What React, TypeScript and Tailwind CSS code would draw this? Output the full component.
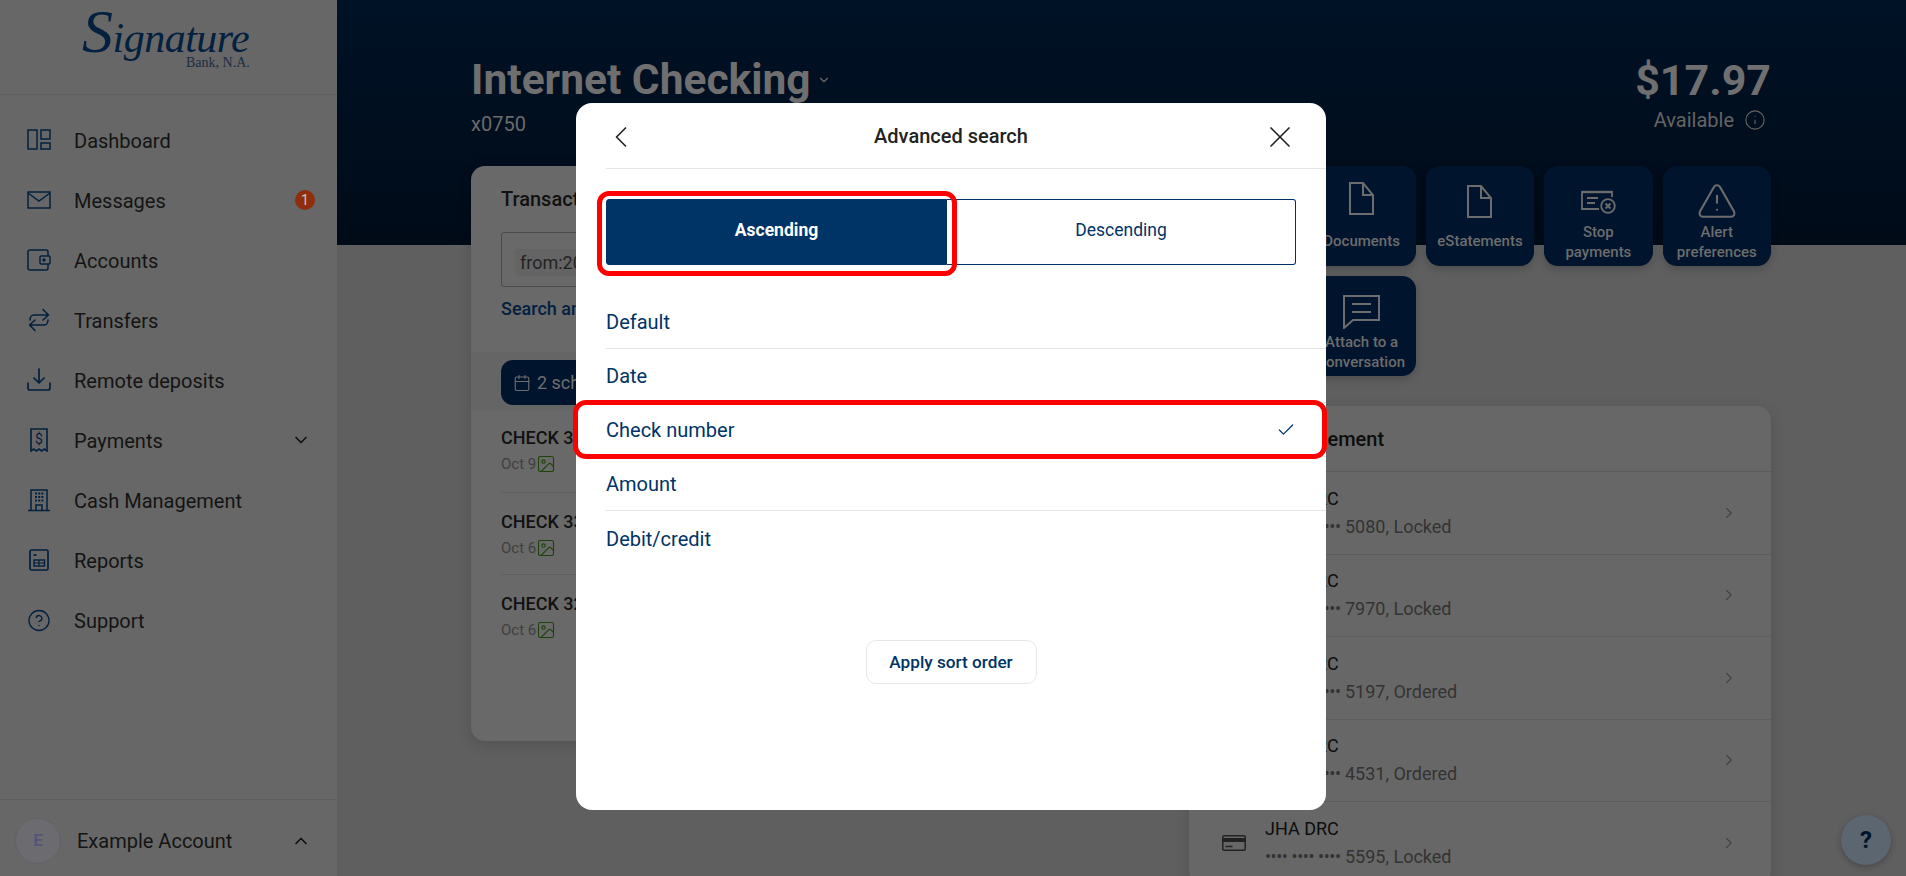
import React from 'react';
import { ChevronDown, ChevronUp, ChevronLeft, ChevronRight, X, Check, Info, CircleHelp, TriangleAlert, Calendar, Image as ImageIcon } from 'lucide-react';

const font = { fontFamily: 'Roboto, "Noto Sans", sans-serif' };
const serif = { fontFamily: '"Liberation Serif", serif' };

const DashboardIcon = () => (
  <svg width="24" height="24" viewBox="0 0 24 24" fill="none" stroke="currentColor" strokeWidth="1.5">
    <rect x="1" y="2" width="9" height="19" />
    <rect x="14" y="2" width="9" height="9" />
    <rect x="14" y="15" width="9" height="6" />
  </svg>
);

const MailIcon = () => (
  <svg width="24" height="24" viewBox="0 0 24 24" fill="none" stroke="currentColor" strokeWidth="1.5">
    <rect x="1" y="4" width="22" height="16" />
    <path d="M1 5l11 8 11-8" />
  </svg>
);

const WalletIcon = () => (
  <svg width="24" height="24" viewBox="0 0 24 24" fill="none" stroke="currentColor" strokeWidth="1.5">
    <path d="M21 8V4a2 2 0 0 0-2-2H3a2 2 0 0 0-2 2v16a2 2 0 0 0 2 2h16a2 2 0 0 0 2-2v-4" />
    <rect x="13" y="8" width="10" height="8" rx="1" />
    <circle cx="17" cy="12" r="1" fill="currentColor" />
  </svg>
);

const TransferIcon = () => (
  <svg width="24" height="24" viewBox="0 0 24 24" fill="none" stroke="currentColor" strokeWidth="1.6" strokeLinecap="round" strokeLinejoin="round">
    <path d="M3 12c0-3 2-5 4-5h14M16 1.5L21.5 7 16 12" />
    <path d="M21 12c0 3-2 5-4 5H3M8 12l-5.5 5L8 22.5" />
  </svg>
);

const DepositIcon = () => (
  <svg width="24" height="24" viewBox="0 0 24 24" fill="none" stroke="currentColor" strokeWidth="1.7" strokeLinecap="round" strokeLinejoin="round">
    <path d="M12 1v13M7 10l5 5 5-5" />
    <path d="M1 15v5a2 2 0 0 0 2 2h18a2 2 0 0 0 2-2v-5" />
  </svg>
);

const ReceiptIcon = () => (
  <svg width="24" height="24" viewBox="0 0 24 24" fill="none" stroke="currentColor" strokeWidth="1.6">
    <path d="M4 1h16v22l-2.7-2-2.6 2-2.7-2-2.6 2-2.7-2L4 23z" />
    <text x="12" y="16" textAnchor="middle" fontSize="14" fontFamily="Roboto, sans-serif" fill="currentColor" stroke="none">$</text>
  </svg>
);

const BuildingIcon = () => (
  <svg width="24" height="24" viewBox="0 0 24 24" fill="none" stroke="currentColor" strokeWidth="1.5">
    <path d="M4 22V2h16v20M1 22.5h22M9 22v-5h6v5" />
    <g fill="currentColor" stroke="none">
      {[8, 11.2, 14.4].map(x => [4.5, 8, 11.5].map(y => <rect key={`${x}-${y}`} x={x} y={y} width="2" height="2" />))}
    </g>
  </svg>
);

const ReportIcon = () => (
  <svg width="24" height="24" viewBox="0 0 24 24" fill="none" stroke="currentColor" strokeWidth="1.7">
    <rect x="3" y="2" width="18" height="20" rx="1.5" />
    <path d="M6.5 7h3" />
    <rect x="7" y="12" width="10.5" height="6" strokeWidth="1.4" />
    <path d="M7 15h10.5M12 12v6" strokeWidth="1.2" />
  </svg>
);

const DocIcon = () => (
  <svg width="25" height="33" viewBox="0 0 25 33" fill="none" stroke="currentColor" strokeWidth="2">
    <path d="M1 1h13l10 12v19H1zM14 1v12h10" />
  </svg>
);

const StopIcon = () => (
  <svg width="35" height="24" viewBox="0 0 35 24" fill="none" stroke="currentColor" strokeWidth="1.8">
    <path d="M31 7V2H1v17h17" />
    <path d="M1 2h30" strokeWidth="2.4" />
    <path d="M6 8h11M6 13h8" />
    <circle cx="27" cy="16" r="6.8" />
    <path d="M24.5 13.5l5 5M29.5 13.5l-5 5" />
  </svg>
);

const ChatIcon = () => (
  <svg width="37" height="34" viewBox="0 0 37 34" fill="none" stroke="currentColor" strokeWidth="2">
    <path d="M1 1h35v24H10l-9 8z" />
    <path d="M9 9h19M9 17h19" />
  </svg>
);

const CardIcon = () => (
  <svg width="24" height="16" viewBox="0 0 24 16" fill="none" stroke="currentColor" strokeWidth="1.5">
    <rect x="0.75" y="0.75" width="22.5" height="14.5" rx="1.5" />
    <path d="M1 5h22" strokeWidth="4" />
    <path d="M3.5 11.5h7" />
  </svg>
);

const nav = [
  { label: 'Dashboard', icon: <DashboardIcon /> },
  { label: 'Messages', icon: <MailIcon />, badge: '1' },
  { label: 'Accounts', icon: <WalletIcon /> },
  { label: 'Transfers', icon: <TransferIcon /> },
  { label: 'Remote deposits', icon: <DepositIcon /> },
  { label: 'Payments', icon: <ReceiptIcon />, caret: true },
  { label: 'Cash Management', icon: <BuildingIcon /> },
  { label: 'Reports', icon: <ReportIcon /> },
  { label: 'Support', icon: <CircleHelp size={29} strokeWidth={1.3} /> },
];

const Sidebar = () => (
  <aside className="w-[337px] h-[876px] shrink-0 bg-[#676767] flex flex-col">
    <div className="h-[95px] border-b border-[#5e5e5e] relative shrink-0 text-[#03203f]">
      <span className="absolute left-[82px] top-[0px] text-[42px] leading-[36px] italic tracking-[-0.5px] whitespace-nowrap" style={serif}>
        <span className="text-[62px] leading-[62px]">S</span>ignature
      </span>
      <span className="absolute left-[186px] top-[56px] text-[14px] leading-[14px] text-[#1c2c44]" style={serif}>
        Bank, N.A.
      </span>
    </div>
    <nav className="flex flex-col pt-[15px] flex-1">
      {nav.map(item => (
        <div key={item.label} className="h-[60px] flex items-center pl-[27px] pr-[26px]">
          <span className="w-[24px] flex justify-center text-[#03203f]">{item.icon}</span>
          <span className="ml-[23px] pt-[1px] text-[20px] text-[#141414] flex-1">{item.label}</span>
          {item.badge && (
            <span className="w-[20px] h-[20px] mr-[-4px] rounded-full bg-[#8e2e0c] text-[#c9c9c9] text-[14px] flex items-center justify-center">
              {item.badge}
            </span>
          )}
          {item.caret && <ChevronDown size={20} className="text-[#111]" />}
        </div>
      ))}
    </nav>
    <div className="h-[77px] border-t border-[#5e5e5e] flex items-center pt-[5px] pl-[15px] pr-[26px] shrink-0">
      <span className="w-[46px] h-[46px] rounded-full bg-[#6b6b70] border border-[#626268] flex items-center justify-center text-[#55557a] font-bold text-[17px]">
        E
      </span>
      <span className="ml-[16px] text-[20px] text-[#141414] flex-1">Example Account</span>
      <ChevronUp size={20} className="text-[#111]" />
    </div>
  </aside>
);

const txns = [
  { name: 'CHECK 3301', date: 'Oct 9', top: 'pt-[15px]' },
  { name: 'CHECK 3300', date: 'Oct 6', top: 'pt-[17px]' },
  { name: 'CHECK 3299', date: 'Oct 6', top: 'pt-[17px]' },
];

const TransactionsCard = () => (
  <section className="w-[694px] h-[575px] rounded-[14px] bg-[#696969] shadow-[0_4px_14px_rgba(0,0,0,0.15)] overflow-hidden shrink-0">
    <div className="px-[30px] pt-[20px] h-[187px] border-b border-[#636363]">
      <h2 className="text-[20px] font-medium leading-[26px] text-[#111]">Transactions</h2>
      <div className="mt-[20px] h-[55px] border border-[#4a4a4a] rounded-[3px] flex items-center pl-[13px]">
        <span className="mt-[5px] h-[27px] px-[5px] rounded-[3px] bg-[#646464] text-[18px] leading-[27px] text-[#222]">from:2024-10-01</span>
      </div>
      <div className="mt-[10px] text-[18px] leading-[24px] font-medium text-[#02213f]">Search and sort</div>
    </div>
    <div className="h-[58px] bg-[#656565] px-[30px] pt-[7px]">
      <div className="h-[45px] w-[260px] rounded-[12px] bg-[#00152d] flex items-center pl-[12px] text-[#6e6e6e]">
        <Calendar size={18} strokeWidth={1.5} />
        <span className="ml-[6px] text-[18px]">2 scheduled</span>
      </div>
    </div>
    <div className="pl-[30px]">
      {txns.map((t, i) => (
        <div key={t.name} className={`h-[82px] ${t.top} ${i < 2 ? 'border-b border-[#5e5e5e]' : ''}`}>
          <div className="text-[18px] leading-[24px] font-medium text-[#111]">{t.name}</div>
          <div className="flex items-center mt-[2px] text-[15px] leading-[24px] text-[#3f3f3f]">
            {t.date}
            <ImageIcon size={20} strokeWidth={1.3} className="text-[#1d4408]" />
          </div>
        </div>
      ))}
    </div>
  </section>
);

const tiles = [
  { label: ['Documents'], icon: <DocIcon />, start: true, cls: 'pt-[16px]', end: 'mb-[15px]' },
  { label: ['eStatements'], icon: <DocIcon />, cls: 'pt-[19px]', end: 'mb-[15px]' },
  { label: ['Stop', 'payments'], icon: <StopIcon />, cls: 'pt-[24px]', end: 'mb-[4px]' },
  { label: ['Alert', 'preferences'], icon: <TriangleAlert size={42} strokeWidth={1.2} className="mt-[-5px]" />, cls: 'pt-[19px]', end: 'mb-[4px]' },
  { label: ['Attach to a', 'conversation'], icon: <ChatIcon />, start: true, cls: 'pt-[19px]', end: 'mb-[4px]' },
];

const cards = ['5080, Locked', '7970, Locked', '5197, Ordered', '4531, Ordered', '5595, Locked'];

const RightColumn = () => (
  <div className="w-[582px] shrink-0">
    <div className="grid grid-cols-5 gap-x-[10px] gap-y-[10px]">
      {tiles.map(t => (
        <div
          key={t.label.join(' ')}
          className={`h-[100px] rounded-[14px] bg-[#00152d] shadow-[0_3px_8px_rgba(0,0,0,0.2)] flex flex-col items-center text-[#6c6c6c] ${t.cls} ${t.start ? 'col-start-2' : ''}`}
        >
          <span className="flex mb-auto">{t.icon}</span>
          <span className={`${t.end} text-[15px] leading-[19.5px] font-medium text-center whitespace-nowrap`}>
            {t.label.map(l => <div key={l}>{l}</div>)}
          </span>
        </div>
      ))}
    </div>
    <section className="mt-[30px] rounded-[14px] bg-[#676767] shadow-[0_4px_14px_rgba(0,0,0,0.15)] overflow-hidden">
      <div className="h-[66px] border-b border-[#5a5a5a] flex items-center pl-[30px]">
        <h2 className="text-[20px] font-medium text-[#0d0d0d]">Card management</h2>
      </div>
      {cards.map(c => (
        <div key={c} className="h-[82.5px] border-b border-[#5d5d5d] flex items-center pl-[33px] pr-[33px]">
          <span className="text-[#222] flex"><CardIcon /></span>
          <div className="ml-[19px] flex-1">
            <div className="text-[18px] leading-[28px] text-[#0d0d0d]">JHA DRC</div>
            <div className="text-[18px] leading-[28px] text-[#333]">
              <span className="tracking-[-0.45px]">•••• •••• ••••</span> {c}
            </div>
          </div>
          <ChevronRight size={18} strokeWidth={1.4} className="text-[#333]" />
        </div>
      ))}
    </section>
  </div>
);

const options = ['Default', 'Date', 'Check number', 'Amount', 'Debit/credit'];

const Modal = () => (
  <div className="absolute left-[576px] top-[103px] w-[750px] h-[707px] rounded-[16px] bg-white pl-[30px] overflow-hidden">
    <div className="relative h-[66px] border-b border-[#e5e5e5] flex items-center justify-center pr-[30px]">
      <ChevronLeft size={36} strokeWidth={1.1} className="absolute left-[-3px] top-[16px] text-[#222]" />
      <h1 className="text-[20px] font-medium text-[#222]">Advanced search</h1>
      <X size={36} strokeWidth={1.1} className="absolute right-[28px] top-[16px] text-[#222]" />
    </div>
    <div className="flex mt-[30px] mr-[30px] h-[66px]">
      <div className="w-[341px] rounded-l-[3px] bg-[#003366] border border-[#003366] flex items-center justify-center text-white text-[17.5px] font-bold pb-[4px]">
        Ascending
      </div>
      <div className="flex-1 rounded-r-[3px] border border-[#003366] border-l-0 flex items-center justify-center text-[#003366] text-[17.5px] pb-[4px]">
        Descending
      </div>
    </div>
    <div className="mt-[30px]">
      {options.map((o, i) => (
        <div key={o} className={`h-[54px] pt-[1px] flex items-center pr-[30px] text-[20px] text-[#003366] justify-between ${i < 4 ? 'border-b border-[#e5e5e5]' : ''}`}>
          {o}
          {o === 'Check number' && <Check size={20} strokeWidth={1.5} />}
        </div>
      ))}
    </div>
    <div className="flex justify-center pr-[30px] mt-[75px]">
      <button className="w-[171px] h-[44px] pt-[1px] rounded-[10px] border border-[#e5e7eb] text-[#003366] text-[17.2px] font-medium">
        Apply sort order
      </button>
    </div>
  </div>
);

export default function App() {
  return (
    <div className="relative flex w-[1906px] h-[876px] overflow-hidden bg-[#5f5f5f]" style={font}>
      <Sidebar />
      <main className="flex-1 min-w-0">
        <header className="h-[245px] bg-linear-to-b from-[#001226] to-[#000b18] pl-[134px] pr-[135px] pt-[53px] flex justify-between">
          <div>
            <div className="flex items-center">
              <span className="text-[42.5px] leading-[54px] font-bold text-[#6f6f6f]">Internet Checking</span>
              <ChevronDown size={14} className="ml-[6px] text-[#6a6a6a]" />
            </div>
            <div className="text-[20px] leading-[26px] mt-[4px] text-[#6a6a6a]">x0750</div>
          </div>
          <div className="flex flex-col items-end">
            <span className="text-[43px] leading-[54px] font-bold text-[#6f6f6f]">$17.97</span>
            <div className="flex items-center text-[#646464]">
              <span className="text-[20px] leading-[26px]">Available</span>
              <Info size={22} strokeWidth={1.2} className="ml-[10px] mr-[5px]" />
            </div>
          </div>
        </header>
        <div className="mt-[-79px] pl-[134px] pr-[135px] flex gap-[24px]">
          <TransactionsCard />
          <RightColumn />
        </div>
      </main>

      <Modal />

      {/* red annotation boxes from the screenshot */}
      <div className="absolute left-[597px] top-[191px] w-[360px] h-[85px] rounded-[12px] border-[5px] border-[#ff0000]" />
      <div className="absolute left-[573px] top-[400px] w-[754px] h-[59px] rounded-[13px] border-[5px] border-[#ff0000]" />

      <div className="absolute left-[1841px] top-[815px] w-[50px] h-[50px] rounded-full bg-[#5b6670] shadow-[0_2px_6px_rgba(0,0,0,0.25)] flex items-center justify-center text-[#00142a] text-[24px] font-bold">
        ?
      </div>
    </div>
  );
}
